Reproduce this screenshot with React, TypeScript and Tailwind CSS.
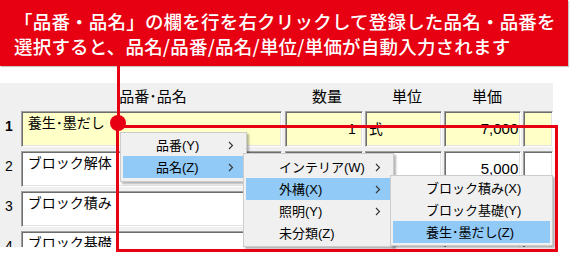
import React from "react";

const cellBase =
  "h-[36px] border border-t-[#a0a0a0] border-l-[#a0a0a0] border-b-white border-r-white shadow-[inset_1px_1px_0_#6d6d6d,inset_-1px_-1px_0_#e3e3e3]";

type Row = {
  no: string;
  bold?: boolean;
  name: string;
  qty?: string;
  unit?: string;
  price?: string;
  yellow?: boolean;
};

const rows: Row[] = [
  { no: "1", bold: true, name: "養生･墨だし", qty: "1", unit: "式", price: "7,000", yellow: true },
  { no: "2", name: "ブロック解体", price: "5,000" },
  { no: "3", name: "ブロック積み" },
  { no: "4", name: "ブロック基礎" },
];

const Chevron = () => (
  <svg width="6" height="9" viewBox="0 0 6 9" className="shrink-0">
    <path d="M1 1l3.5 3.5L1 8" fill="none" stroke="#333" strokeWidth="1.1" />
  </svg>
);

type MenuItem = { label: string; sub?: boolean; active?: boolean };

const Menu = ({ items, className }: { items: MenuItem[]; className: string }) => (
  <div
    className={`absolute flex flex-col bg-[#f0f0f0] border border-[#cccccc] shadow-[2px_2px_2px_rgba(0,0,0,0.3)] ${className}`}
  >
    {items.map((it) => (
      <div
        key={it.label}
        className={`mx-[2px] flex h-[22px] items-center pl-[33px] pr-[10px] text-[13px] text-black ${
          it.active ? "bg-[#91c9f7]" : ""
        }`}
      >
        <span className="flex-1 leading-none">{it.label}</span>
        {it.sub && <Chevron />}
      </div>
    ))}
  </div>
);

export default function App() {
  return (
    <div className="relative h-[254px] w-[570px] overflow-hidden bg-white font-['Liberation_Sans','Noto_Sans_CJK_JP',sans-serif]">
      {/* banner */}
      <div className="h-[66px] w-[568px] bg-[#e60012] pl-[14px] pt-[9px] font-['Noto_Sans_CJK_JP',sans-serif] text-[18.5px] font-medium leading-[25px] tracking-[0.2px] text-white shadow-[1px_1px_1px_#c8c8c8]">
        <p>「品番・品名」の欄を行を右クリックして登録した品名・品番を</p>
        <p>選択すると、品名/品番/品名/単位/単価が自動入力されます</p>
      </div>

      {/* grid */}
      <div className="mt-[17px] h-[164px] w-[553px] overflow-hidden bg-[#f0f0f0]">
        <div className="flex h-[28px] items-center text-[15px] text-black">
          <div className="w-[21px]" />
          <div className="w-[264px] text-center">品番･品名</div>
          <div className="ml-[3px] w-[78px] text-center">数量</div>
          <div className="ml-[2px] w-[78px] text-center">単位</div>
          <div className="ml-[2px] w-[78px] text-center">単価</div>
        </div>
        <div className="flex flex-col gap-[4px]">
          {rows.map((r) => {
            const bg = r.yellow ? "bg-[#ffffc8]" : "bg-white";
            return (
              <div key={r.no} className="flex h-[36px] text-black">
                <div
                  className={`w-[21px] pl-[5px] pt-[5px] text-[14px] ${r.bold ? "font-bold" : ""}`}
                >
                  {r.no}
                </div>
                <div className={`${cellBase} ${bg} w-[264px] pl-[6px] pt-[1px] text-[14px]`}>
                  {r.name}
                </div>
                <div
                  className={`${cellBase} ${bg} ml-[3px] flex w-[78px] items-center justify-end pr-[6px] text-[14px]`}
                >
                  {r.qty}
                </div>
                <div className={`${cellBase} ${bg} ml-[2px] flex w-[78px] items-center pl-[3px] text-[14px]`}>
                  {r.unit}
                </div>
                <div
                  className={`${cellBase} ${bg} ml-[2px] flex w-[78px] items-center justify-end pr-[2px] text-[15px]`}
                >
                  {r.price}
                </div>
                <div className={`${cellBase} ${bg} ml-[2px] w-[30px]`} />
              </div>
            );
          })}
        </div>
      </div>

      {/* context menus */}
      <Menu
        className="left-[120px] top-[132px] w-[127px] pt-[1px] pb-[3px]"
        items={[
          { label: "品番(Y)", sub: true },
          { label: "品名(Z)", sub: true, active: true },
        ]}
      />
      <Menu
        className="left-[243px] top-[153px] w-[151px] pt-[2px] pb-[2px]"
        items={[
          { label: "インテリア(W)", sub: true },
          { label: "外構(X)", sub: true, active: true },
          { label: "照明(Y)", sub: true },
          { label: "未分類(Z)" },
        ]}
      />
      <Menu
        className="left-[390px] top-[175px] w-[163px] pt-[1px] pb-[2px]"
        items={[
          { label: "ブロック積み(X)" },
          { label: "ブロック基礎(Y)" },
          { label: "養生･墨だし(Z)", active: true },
        ]}
      />

      {/* callout line, dot and frame */}
      <div className="absolute left-[117px] top-[66px] h-[58px] w-[2.5px] bg-[#e60012]" />
      <div className="absolute left-[116px] top-[125px] h-[127px] w-[442px] border-[3px] border-[#e60012]" />
      <div className="absolute left-[110px] top-[115px] h-[16px] w-[16px] rounded-full bg-[#e60012]" />
    </div>
  );
}
